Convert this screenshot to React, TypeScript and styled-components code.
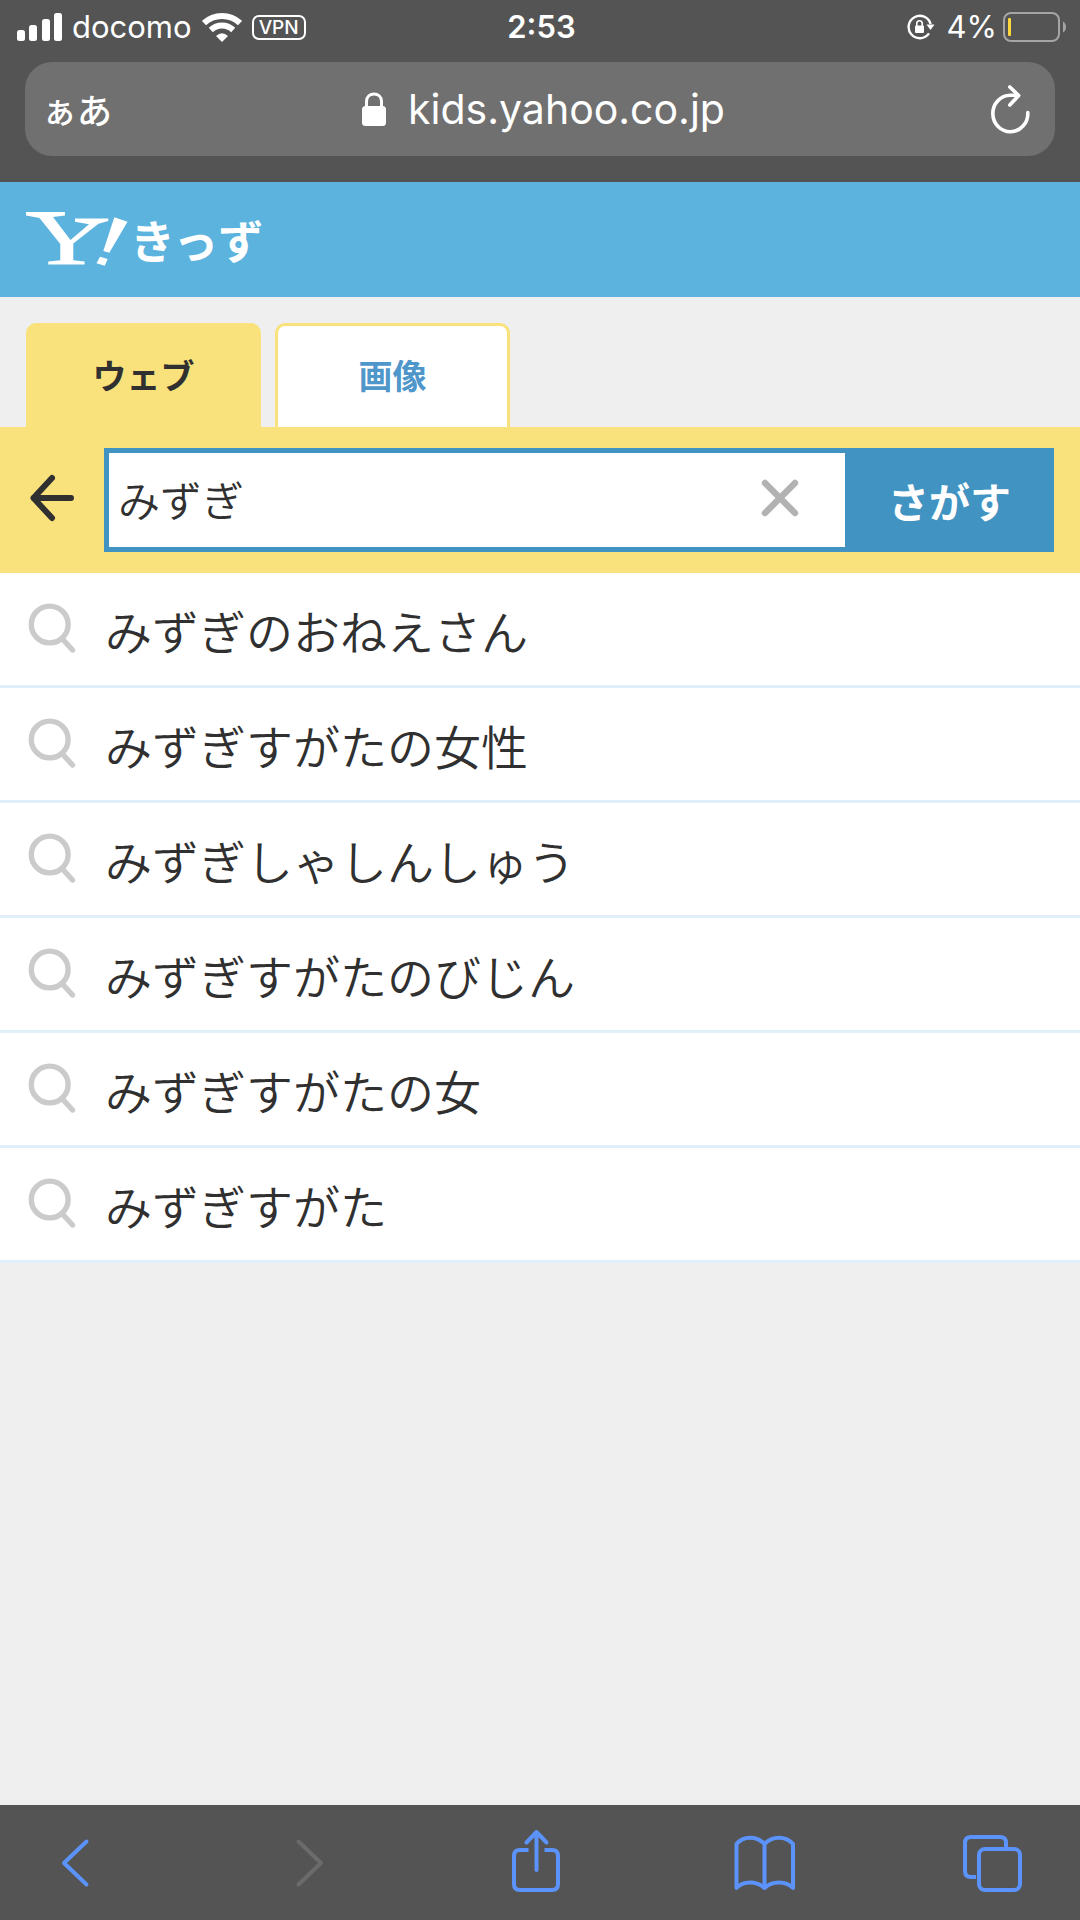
import React, { useState } from "react";
import styled, { createGlobalStyle } from "styled-components";

const latin = `Inter, "Liberation Sans", "Noto Sans CJK JP", sans-serif`;
const japanese = `"Noto Sans CJK JP", "Liberation Sans", sans-serif`;

const GlobalStyle = createGlobalStyle`
  *, *::before, *::after { box-sizing: border-box; }
  body { margin: 0; background: #efefef; }
  button { margin: 0; padding: 0; border: 0; background: none; color: inherit; font: inherit; cursor: pointer; }
  svg { display: block; flex: none; }
`;

const Screen = styled.div`
  display: flex;
  flex-direction: column;
  min-height: 100vh;
  background: #efefef;
  color: #303030;
  font-family: ${japanese};
`;

const BrowserChrome = styled.header`
  background: #545454;
  color: #fff;
  font-family: ${latin};
  padding-bottom: 26px;
`;

const StatusBar = styled.div`
  display: grid;
  grid-template-columns: 1fr auto 1fr;
  align-items: center;
  height: 54px;
  padding: 0 14px 0 17px;
  font-size: 31px;
  line-height: 36px;
`;

const StatusGroup = styled.div<{ $end?: boolean }>`
  display: flex;
  align-items: center;
  justify-content: ${(p) => (p.$end ? "flex-end" : "flex-start")};
  gap: ${(p) => (p.$end ? "6px" : "10px")};
`;

const Clock = styled.time`
  font-weight: 600;
`;

const VpnBadge = styled.span`
  border: 2px solid #fff;
  border-radius: 7px;
  padding: 0 5px;
  font-size: 19px;
  font-weight: 500;
  line-height: 21px;
`;

const Percent = styled.span`
  margin-left: 6px;
`;

const AddressBar = styled.div`
  display: grid;
  grid-template-columns: 1fr auto 1fr;
  align-items: center;
  height: 94px;
  margin: 8px 25px 0;
  padding: 0 22px 0 17px;
  border-radius: 27px;
  background: #707070;
`;

const TextSizeButton = styled.button`
  justify-self: start;
  font-family: ${japanese};
  font-weight: 500;
  font-size: 35px;
  line-height: 48px;
`;

const Address = styled.div`
  display: flex;
  align-items: center;
  gap: 22px;
  padding-left: 12px;
  font-size: 41px;
  line-height: 52px;
`;

const ReloadButton = styled.button`
  justify-self: end;
`;

const SiteHeader = styled.div`
  display: flex;
  align-items: center;
  height: 115px;
  padding: 0 26px;
  background: #5bb3de;
`;

const Logo = styled.a`
  display: flex;
  align-items: center;
  color: #fff;
  text-decoration: none;
  font-size: 45px;
  font-weight: 700;
  line-height: 60px;
`;

const Tabs = styled.nav`
  display: flex;
  gap: 14px;
  padding: 26px 26px 0;
`;

const Tab = styled.a<{ $active?: boolean }>`
  flex: 0 1 235px;
  height: 104px;
  padding-top: 25px;
  border: 3px solid #f9e27b;
  border-bottom: 0;
  border-radius: 10px 10px 0 0;
  background: ${(p) => (p.$active ? "#f9e27b" : "#fff")};
  color: ${(p) => (p.$active ? "#303030" : "#4f97ca")};
  font-size: 34px;
  font-weight: 700;
  line-height: 48px;
  text-align: center;
  text-decoration: none;
`;

const SearchForm = styled.form`
  display: flex;
  align-items: center;
  height: 146px;
  padding: 0 26px;
  background: #f9e27b;
`;

const BackButton = styled.button`
  width: 78px;
  padding: 0 0 4px 3px;
`;

const Field = styled.div`
  display: flex;
  flex: 1;
  align-items: center;
  min-width: 0;
  height: 104px;
  border: 5px solid #4193c1;
  border-right: 0;
  background: #fff;
`;

const SearchInput = styled.input`
  flex: 1;
  min-width: 0;
  height: 94px;
  padding: 0 0 4px 9px;
  border: 0;
  outline: 0;
  background: transparent;
  color: #303030;
  font-family: ${japanese};
  font-size: 42px;
  font-weight: 350;
`;

const ClearButton = styled.button`
  padding: 8px 45px 12px 20px;
`;

const SubmitButton = styled.button`
  width: 209px;
  height: 104px;
  background: #4193c1;
  color: #fff;
  font-size: 41px;
  font-weight: 700;
  line-height: 60px;
`;

const Suggestions = styled.ul`
  margin: 0;
  padding: 0;
  list-style: none;
  background: #fff;
`;

const SuggestionItem = styled.li`
  border-bottom: 3px solid #dff0fa;
`;

const SuggestionLink = styled.a`
  display: flex;
  align-items: center;
  gap: 27px;
  height: 112px;
  padding: 2px 26px 0;
  color: #303030;
  font-size: 47px;
  font-weight: 350;
  line-height: 64px;
  text-decoration: none;
`;

const Toolbar = styled.footer`
  display: flex;
  align-items: center;
  justify-content: space-between;
  height: 115px;
  margin-top: auto;
  padding: 0 58px 0 49px;
  background: #545454;
`;

const ToolButton = styled.button<{ $muted?: boolean }>`
  color: ${(p) => (p.$muted ? "#6b6b6b" : "#5b93fb")};
`;

const ToolIcon = ({ children }: { children: React.ReactNode }) => (
  <svg width="60" height="70" viewBox="0 0 60 70" fill="none" stroke="currentColor" strokeWidth="4" strokeLinecap="round" strokeLinejoin="round" overflow="visible">
    {children}
  </svg>
);

const SignalIcon = () => (
  <svg width="45" height="28" viewBox="0 0 45 28" fill="#fff">
    <rect x="0" y="17" width="8" height="11" rx="2.5" />
    <rect x="12" y="12" width="8" height="16" rx="2.5" />
    <rect x="25" y="6" width="8" height="22" rx="2.5" />
    <rect x="37" y="0" width="8" height="28" rx="2.5" />
  </svg>
);

const WifiIcon = () => (
  <svg width="40" height="30" viewBox="0 0 40 30">
    <g fill="none" stroke="#fff" strokeWidth="6">
      <path d="M2 11C12 1.500 28 1.500 38 11" />
      <path d="M8.800 18C15.300 12 24.700 12 31.200 18" />
    </g>
    <path d="M20 30L14 24Q20 18.500 26 24Z" fill="#fff" />
  </svg>
);

const RotationLockIcon = () => (
  <svg width="28" height="26" viewBox="0 0 28 26" fill="none" stroke="#fff" strokeWidth="2.4">
    <path d="M23.600 10A11.200 11.200 0 1 0 22 19.400" />
    <path d="M19.500 10.500H27.500L23.500 16Z" fill="#fff" stroke="none" />
    <rect x="8" y="11.500" width="9" height="7.500" rx="1" fill="#fff" stroke="none" />
    <path d="M9.800 12V9.500A2.700 2.700 0 0 1 15.200 9.500V12" strokeWidth="1.600" />
  </svg>
);

const BatteryIcon = () => (
  <svg width="63" height="30" viewBox="0 0 63 30">
    <rect x="1" y="1" width="55" height="28" rx="7" fill="none" stroke="#a5a5a5" strokeWidth="2" />
    <rect x="5" y="6" width="3" height="18" rx="1" fill="#ffd83d" />
    <path d="M60 9.500Q63 11.500 63 15T60 20.500Z" fill="#a5a5a5" />
  </svg>
);

const LockIcon = () => (
  <svg width="24" height="34" viewBox="0 0 24 34">
    <rect y="14" width="24" height="20" rx="3.500" fill="#fff" />
    <path d="M4.500 16V9.500C4.500-.5 19.500-.5 19.500 9.500V16" fill="none" stroke="#fff" strokeWidth="3" />
  </svg>
);

const ReloadIcon = () => (
  <svg width="44" height="50" viewBox="0 0 44 50" fill="none" stroke="#fff" strokeWidth="3.6" strokeLinecap="round" strokeLinejoin="round">
    <path d="M38.800 28.500A17.500 18.200 0 1 1 21.300 11.300H29" />
    <path d="M20.800 3L29.700 11.500L20.800 21" />
  </svg>
);

const YahooMark = () => (
  <svg width="104" height="56" viewBox="0 0 104 56" fill="#fff" aria-hidden="true">
    <path d="M0 0H39V3.500L27 5L44.500 28L63 12.300L49 9.700V6.500H82.300V9L72.500 11.700L47.300 31.500V48.300L58.600 49.500V52.500H22.300V49.500L34.300 48.300V32L13.500 6L0 3.500Z" />
    <path d="M88.300 5.300L101.500 9.700L83.300 40.700L77.300 39Z" />
    <path d="M74 44.700L81.700 47L78.700 53.700L70.500 51.300Z" />
  </svg>
);

const BackArrowIcon = () => (
  <svg width="46" height="48" viewBox="0 0 46 48" fill="none" stroke="#303030" strokeWidth="6" strokeLinecap="round" strokeLinejoin="round">
    <path d="M23 4L4.500 24L23 44M4.500 24H42" />
  </svg>
);

const ClearIcon = () => (
  <svg width="40" height="40" viewBox="0 0 40 40" stroke="#b2b2b2" strokeWidth="6.400" strokeLinecap="round">
    <path d="M5 5L35 35M35 5L5 35" />
  </svg>
);

const SearchIcon = () => (
  <svg width="52" height="60" viewBox="0 0 52 60" fill="none" stroke="#cbcbcb" strokeWidth="5.400" strokeLinecap="round">
    <circle cx="23.700" cy="24.500" r="18.400" />
    <path d="M36.500 39L46.500 50" />
  </svg>
);

const words = [
  "みずぎのおねえさん",
  "みずぎすがたの女性",
  "みずぎしゃしんしゅう",
  "みずぎすがたのびじん",
  "みずぎすがたの女",
  "みずぎすがた",
];

export default function App() {
  const [query, setQuery] = useState("みずぎ");

  return (
    <Screen>
      <GlobalStyle />
      <BrowserChrome>
        <StatusBar>
          <StatusGroup>
            <SignalIcon />
            <span>docomo</span>
            <WifiIcon />
            <VpnBadge>VPN</VpnBadge>
          </StatusGroup>
          <Clock>2:53</Clock>
          <StatusGroup $end>
            <RotationLockIcon />
            <Percent>4%</Percent>
            <BatteryIcon />
          </StatusGroup>
        </StatusBar>
        <AddressBar>
          <TextSizeButton type="button">ぁあ</TextSizeButton>
          <Address>
            <LockIcon />
            <span>kids.yahoo.co.jp</span>
          </Address>
          <ReloadButton type="button" aria-label="再読み込み">
            <ReloadIcon />
          </ReloadButton>
        </AddressBar>
      </BrowserChrome>

      <SiteHeader>
        <Logo href="#top" aria-label="Y!きっず">
          <YahooMark />
          <span>きっず</span>
        </Logo>
      </SiteHeader>

      <main>
        <Tabs>
          <Tab href="#web" $active>ウェブ</Tab>
          <Tab href="#image">画像</Tab>
        </Tabs>
        <SearchForm onSubmit={(e) => e.preventDefault()}>
          <BackButton type="button" aria-label="もどる">
            <BackArrowIcon />
          </BackButton>
          <Field>
            <SearchInput
              type="text"
              aria-label="けんさくワード"
              value={query}
              onChange={(e) => setQuery(e.target.value)}
            />
            <ClearButton type="button" aria-label="けす" onClick={() => setQuery("")}>
              <ClearIcon />
            </ClearButton>
          </Field>
          <SubmitButton type="submit">さがす</SubmitButton>
        </SearchForm>
        <Suggestions>
          {words.map((word) => (
            <SuggestionItem key={word}>
              <SuggestionLink href="#search">
                <SearchIcon />
                <span>{word}</span>
              </SuggestionLink>
            </SuggestionItem>
          ))}
        </Suggestions>
      </main>

      <Toolbar>
        <ToolButton type="button" aria-label="前のページ">
          <ToolIcon>
            <path d="M37.500 13.500L15 35L37.500 56.500" />
          </ToolIcon>
        </ToolButton>
        <ToolButton type="button" aria-label="次のページ" $muted>
          <ToolIcon>
            <path d="M21.500 13.500L44 35L21.500 56.500" />
          </ToolIcon>
        </ToolButton>
        <ToolButton type="button" aria-label="共有">
          <ToolIcon>
            <path d="M22.500 22H14Q8 22 8 28V56Q8 62 14 62H46Q52 62 52 56V28Q52 22 46 22H38.500" strokeLinecap="butt" />
            <path d="M30.500 42V4M20.500 14.500L30.500 4L40.500 14.500" />
          </ToolIcon>
        </ToolButton>
        <ToolButton type="button" aria-label="ブックマーク">
          <ToolIcon>
            <path d="M30.500 16C23 7.500 9 7.500 2.500 16V60C9 52.500 23 52.500 30.500 60C38 52.500 52 52.500 59 60V16C52 7.500 38 7.500 30.500 16V60" />
          </ToolIcon>
        </ToolButton>
        <ToolButton type="button" aria-label="タブ">
          <ToolIcon>
            <path d="M14 49H9Q3 49 3 43V15Q3 9 9 9H38Q44 9 44 15V21" strokeLinecap="butt" />
            <rect x="17" y="21" width="41" height="41" rx="6" />
          </ToolIcon>
        </ToolButton>
      </Toolbar>
    </Screen>
  );
}
